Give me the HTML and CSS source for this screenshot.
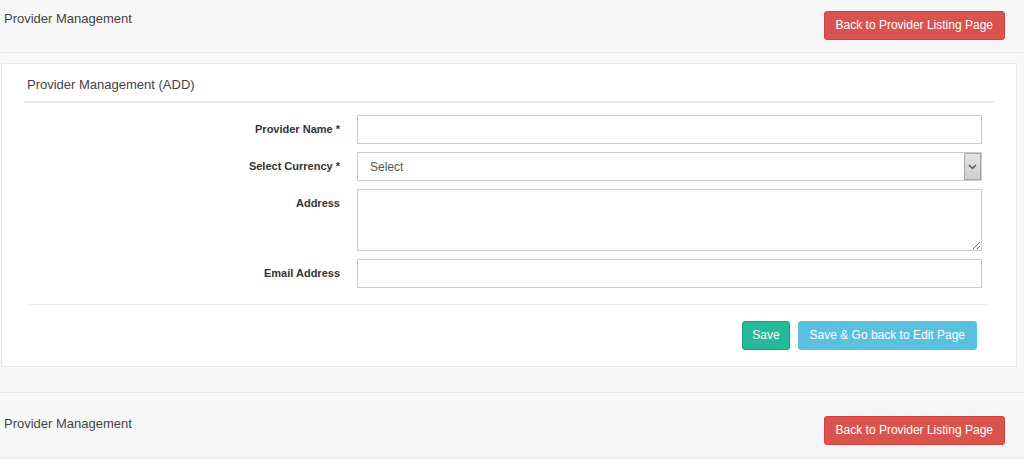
FILE: index.html
```html
<!DOCTYPE html>
<html lang="en">
<head>
<meta charset="utf-8">
<title>Provider Management</title>
<link rel="stylesheet" href="styles.css">
</head>
<body>
<div class="page">
  <div class="pagehead pagehead--top">
    <h3 class="pagehead__title">Provider Management</h3>
    <a class="btn btn-danger" href="#">Back to Provider Listing Page</a>
  </div>

  <div class="content">
    <div class="panel">
      <div class="panel__title">Provider Management (ADD)</div>
      <form class="form">
        <div class="form__row">
          <label class="form__label">Provider Name *</label>
          <input class="form__control" type="text">
        </div>
        <div class="form__row">
          <label class="form__label">Select Currency *</label>
          <div class="select">
            <select class="form__control select__input">
              <option>Select</option>
            </select>
            <span class="select__arrow"><svg width="9" height="6" viewBox="0 0 9 6"><path d="M1 1 L4.5 4.5 L8 1" fill="none" stroke="#555" stroke-width="1.4"/></svg></span>
          </div>
        </div>
        <div class="form__row">
          <label class="form__label">Address</label>
          <textarea class="form__control form__textarea"></textarea>
        </div>
        <div class="form__row">
          <label class="form__label">Email Address</label>
          <input class="form__control" type="text">
        </div>
        <div class="divider"></div>
        <div class="actions">
          <button class="btn btn-success" type="button">Save</button>
          <button class="btn btn-info" type="button">Save &amp; Go back to Edit Page</button>
        </div>
      </form>
    </div>
  </div>

  <div class="pagehead pagehead--bottom">
    <h3 class="pagehead__title">Provider Management</h3>
    <a class="btn btn-danger" href="#">Back to Provider Listing Page</a>
  </div>
</div>
</body>
</html>
```

FILE: styles.css
```css
* { box-sizing: border-box; }

html, body {
  margin: 0;
  padding: 0;
  background: #f7f7f7;
  font-family: "Liberation Sans", Arial, sans-serif;
  color: #333;
}

.page {
  width: 1024px;
  height: 460px;
  overflow: hidden;
}

.pagehead {
  display: flex;
  justify-content: space-between;
  align-items: flex-start;
  padding: 0 19px 0 4px;
  background: #f7f7f7;
  border-bottom: 1px solid #e6e9ed;
}

.pagehead--top {
  height: 53px;
  padding-top: 10px;
}

.pagehead--bottom {
  height: 66px;
  padding-top: 22px;
  border-top: 1px solid #e6e9ed;
}

.pagehead__title {
  margin: 0;
  font-size: 13px;
  font-weight: normal;
  line-height: 18px;
  color: #444;
}

.btn {
  display: inline-block;
  height: 29px;
  padding: 0 10px;
  border: 1px solid transparent;
  border-radius: 3px;
  font-family: "Liberation Sans", Arial, sans-serif;
  font-size: 12px;
  line-height: 27px;
  color: #fff;
  text-decoration: none;
  cursor: pointer;
}

.pagehead .btn { margin-top: 1px; }

.btn-danger {
  background: #d9534f;
  border-color: #d43f3a;
  padding: 0 11px;
}

.btn-success {
  background: #26b99a;
  border-color: #169f85;
  padding: 0 9px;
}

.btn-info {
  background: #5bc0de;
  border-color: #5bc0de;
  padding: 0 11px;
}

.content {
  padding: 10px 7px 25px 1px;
}

.panel {
  background: #fff;
  border: 1px solid #e6e9ed;
  padding: 12px 22px 16px 22px;
}

.panel__title {
  font-size: 13px;
  line-height: 18px;
  color: #444;
  padding: 0 3px 7px 3px;
  border-bottom: 2px solid #e6e9ed;
}

.form {
  padding-top: 12px;
}

.form__row {
  display: grid;
  grid-template-columns: 333px 625px;
  margin-bottom: 8px;
}

.form__label {
  text-align: right;
  padding: 8px 17px 0 0;
  font-size: 11px;
  font-weight: bold;
  line-height: 13px;
  color: #333;
}

.form__control {
  display: block;
  width: 100%;
  height: 29px;
  margin: 0;
  border: 1px solid #ccc;
  border-radius: 0;
  background: #fff;
  padding: 0 12px;
  font-family: "Liberation Sans", Arial, sans-serif;
  font-size: 12px;
  color: #555;
}

.form__textarea {
  height: 62px;
  padding: 6px 12px;
  resize: vertical;
}

.select {
  position: relative;
}

.select__input {
  appearance: none;
  -webkit-appearance: none;
  outline: none;
}

.select__arrow {
  position: absolute;
  top: 1px;
  right: 1px;
  width: 17px;
  height: 27px;
  display: flex;
  align-items: center;
  justify-content: center;
  background: linear-gradient(#e4e4e4, #cfcfcf);
  border: 1px solid #a9a9a9;
  pointer-events: none;
}

.divider {
  height: 1px;
  background: #e6e9ed;
  margin: 16px 5px 16px 3px;
}

.actions {
  display: flex;
  justify-content: flex-end;
  gap: 8px;
  padding-right: 17px;
}
```
